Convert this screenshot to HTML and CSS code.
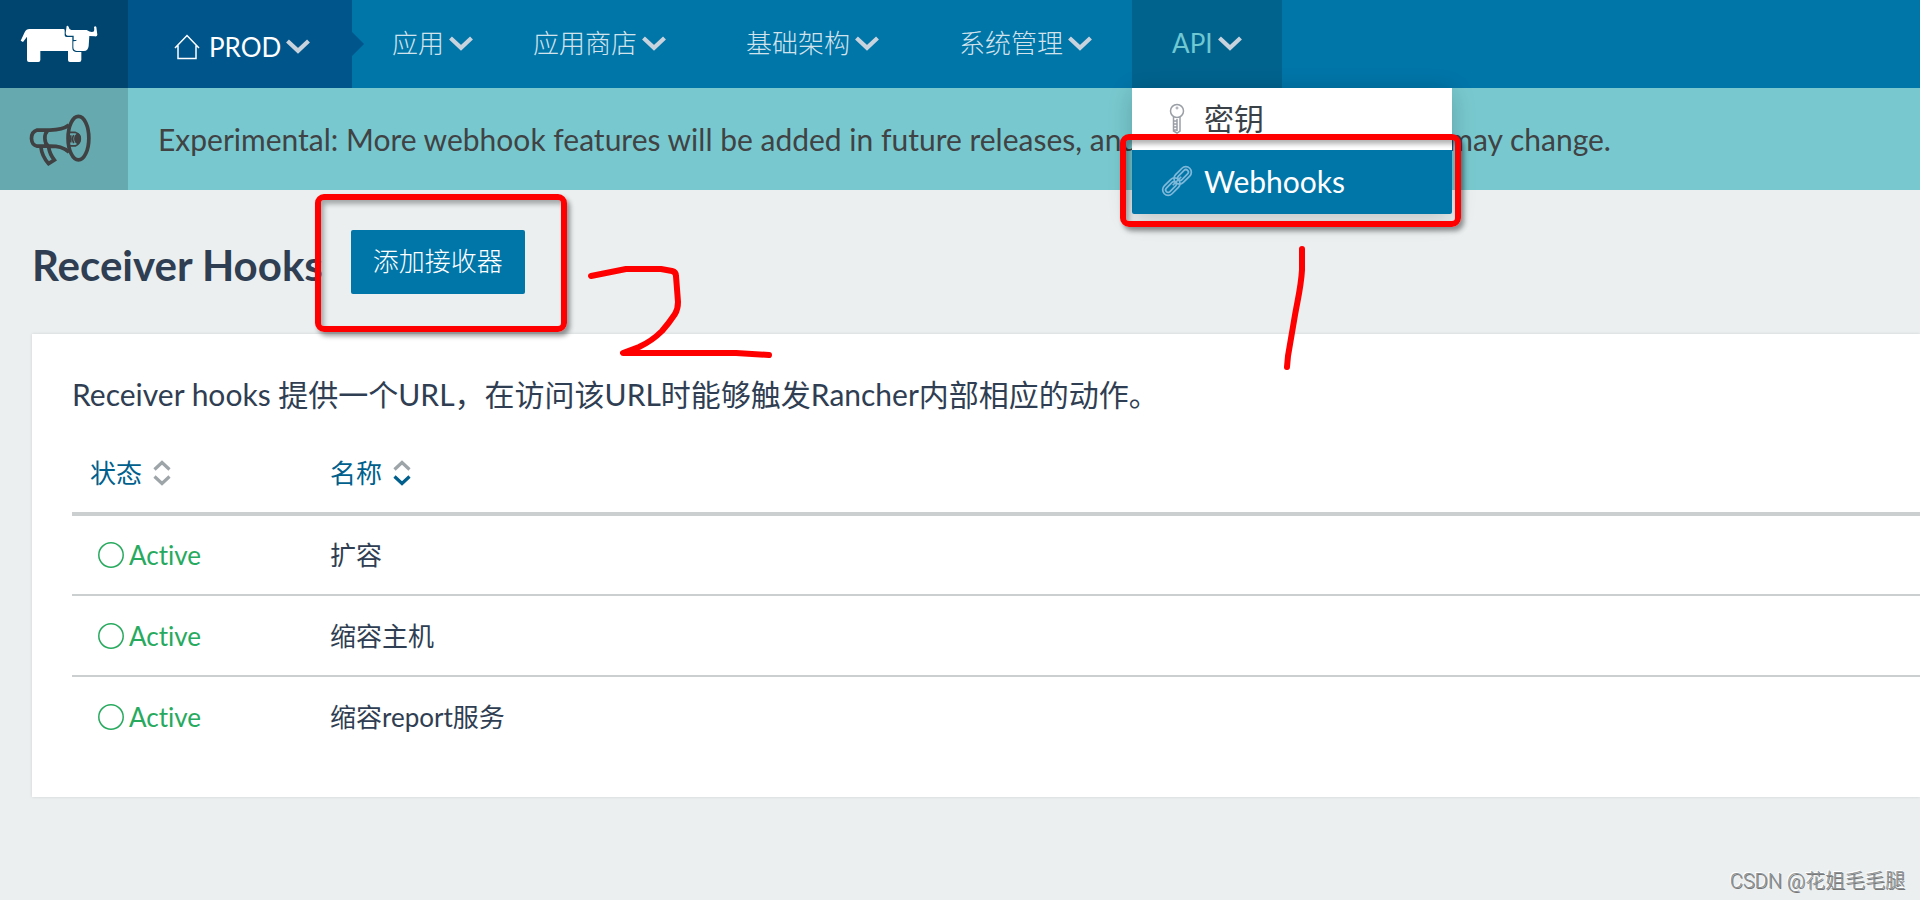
FILE: index.html
```html
<!DOCTYPE html>
<html lang="zh-CN">
<head>
<meta charset="utf-8">
<meta name="viewport" content="width=device-width, initial-scale=1">
<title>Receiver Hooks</title>
<link rel="stylesheet" href="styles.css">
</head>
<body>
<svg class="defs" width="0" height="0" aria-hidden="true">
  <symbol id="chevron" viewBox="0 0 24 15"><path d="M1.500 2 12 11.800 22.500 2" fill="none" stroke="#c9d3dd" stroke-width="4.200"/></symbol>
  <symbol id="ring" viewBox="0 0 26 26"><circle cx="13" cy="13" r="12.200" fill="none" stroke="#27aa5e" stroke-width="1.500"/></symbol>
  <symbol id="up" viewBox="0 0 18 11"><path d="M1.500 9.500 9 2.500 16.500 9.500" fill="none" stroke="currentColor" stroke-width="3.200"/></symbol>
  <symbol id="down" viewBox="0 0 18 11"><path d="M1.500 1.500 9 8.500 16.500 1.500" fill="none" stroke="currentColor" stroke-width="3.200"/></symbol>
</svg>

<header class="header">
  <a class="logo" href="#" aria-label="Rancher">
    <svg class="logo-mark" viewBox="60 75 234 114" aria-hidden="true">
      <path fill="#fff" d="M62 122 74 97Q79 87 88 87H190Q194 87 194 91V106Q194 111 200 111H217V143Q217 154 228 156H244V180Q244 186 238 186H210Q204 186 204 180V153H121V180Q121 186 115 186H87Q81 186 81 180V110L69 126Z"/>
      <path fill="#fff" d="M200 78Q204 76 206 81 207 89 214 90H260Q274 99 282 94 284 89 282 81 286 76 289 81L292 104Q292 110 284 109L268 108 266 138Q264 153 252 153H230Q220 152 220 142V124Q228 124 232 119 228 121 221 120V107H203Q197 107 197 99Z"/>
    </svg>
  </a>
  <a class="env" href="#">
    <svg class="home" viewBox="0 0 26 26" aria-hidden="true"><path d="M1 14 13 1.500 25 14M4 11.500V24.500H22V11.500" fill="none" stroke="#fff" stroke-width="1.500"/></svg>
    <span>PROD</span>
    <svg class="chevron"><use href="#chevron"/></svg>
  </a>
  <nav class="nav">
    <a class="nav-link nav-link-first" href="#">应用<svg class="chevron"><use href="#chevron"/></svg></a>
    <a class="nav-link" href="#">应用商店<svg class="chevron"><use href="#chevron"/></svg></a>
    <a class="nav-link" href="#">基础架构<svg class="chevron"><use href="#chevron"/></svg></a>
    <a class="nav-link" href="#">系统管理<svg class="chevron"><use href="#chevron"/></svg></a>
    <div class="nav-drop">
      <a class="nav-link nav-link-open" href="#">API<svg class="chevron"><use href="#chevron"/></svg></a>
      <div class="menu">
        <a class="menu-item" href="#">
          <svg class="menu-icon" viewBox="0 0 30 32" aria-hidden="true"><g fill="none" stroke="#9a9fa6"><circle cx="15" cy="9" r="6.500" stroke-width="1.500"/><circle cx="15" cy="6" r="1"/><path stroke-width="1.500" d="M11.500 15V29L15 31 18 29V15M15 17V29M12 19H15M12 22H15M12 25H15M12 28H15"/></g></svg>
          密钥
        </a>
        <a class="menu-item menu-item-active" href="#">
          <svg class="menu-icon" viewBox="0 0 30 32" aria-hidden="true"><g transform="rotate(-45 15 16)" fill="none" stroke="#7fb9da" stroke-width="1.700"><rect x="-3" y="10.500" width="20" height="11" rx="5.500"/><rect x="0" y="13.500" width="13" height="5" rx="2.500"/><rect x="13" y="10.500" width="20" height="11" rx="5.500"/><rect x="17" y="13.500" width="13" height="5" rx="2.500"/><path d="M9 16H21"/></g></svg>
          Webhooks
        </a>
        <div class="mark mark-menu"></div>
        <svg class="stroke stroke-one" viewBox="1280 240 30 140" aria-hidden="true"><path d="M1302 249V270C1301 287 1298 298 1295 315L1288 356 1287 367"/></svg>
      </div>
    </div>
  </nav>
</header>

<section class="banner">
  <div class="banner-icon">
    <svg viewBox="88 345 184 158" class="horn" aria-hidden="true"><g fill="none" stroke="#3f4142" stroke-width="11"><ellipse cx="235" cy="417" rx="31" ry="65"/><path d="M207 378C190 391 173 393 150 393H112Q95 398 95 418 96 438 112 441H150C174 441 190 443 207 459M144 393Q134 404 135 418 135 433 145 441M123 443Q126 471 146 493L163 482Q149 464 146 443"/><path stroke-width="5" d="M207 400H226Q240 404 240 420 238 436 226 440H207M212 408V430M221 408Q214 418 221 432"/></g><path fill="#3f4142" d="M234 402Q222 407 222 419T234 436Q243 431 243 419T234 402Z"/></svg>
  </div>
  <p class="banner-text">Experimental: More webhook features will be added in future releases, and existing functionalities may change.</p>
</section>

<main class="main">
  <div class="title-row">
    <h1 class="title">Receiver Hooks</h1>
    <div class="add-wrap">
      <button class="add" type="button">添加接收器</button>
      <div class="mark mark-add"></div>
      <svg class="stroke stroke-two" viewBox="586 262 192 98" aria-hidden="true"><path d="M592 276 627 269H662L673 271Q677 272 677 276L679 302Q679 309 676 314 670 323 663 331 653 341 640 347L624 353H737L770 355"/></svg>
    </div>
  </div>
  <section class="panel">
    <p class="intro">Receiver hooks 提供一个URL，在访问该URL时能够触发Rancher内部相应的动作。</p>
    <table class="hooks">
      <thead>
        <tr>
          <th class="col-state" scope="col"><a class="sort" href="#">状态<span class="arrows"><svg><use href="#up"/></svg><svg><use href="#down"/></svg></span></a></th>
          <th scope="col"><a class="sort" href="#">名称<span class="arrows"><svg><use href="#up"/></svg><svg class="sorted"><use href="#down"/></svg></span></a></th>
        </tr>
      </thead>
      <tbody>
        <tr><td><span class="state"><svg><use href="#ring"/></svg>Active</span></td><td>扩容</td></tr>
        <tr><td><span class="state"><svg><use href="#ring"/></svg>Active</span></td><td>缩容主机</td></tr>
        <tr><td><span class="state"><svg><use href="#ring"/></svg>Active</span></td><td>缩容report服务</td></tr>
      </tbody>
    </table>
  </section>
</main>
<div class="credit">CSDN @花姐毛毛腿</div>
</body>
</html>
```
FILE: styles.css
```css
* {
  box-sizing: border-box;
}

body {
  margin: 0;
  min-height: 100vh;
  position: relative;
  background: #ebeff0;
  color: #2f3e52;
  font-family: "Lato", "Noto Sans CJK SC", sans-serif;
  font-size: 26px;
  font-variant-ligatures: none;
  line-height: 32px;
}

a {
  color: inherit;
  text-decoration: none;
}

svg {
  display: block;
  flex: none;
}

.defs {
  position: absolute;
}

.header {
  display: flex;
  height: 88px;
  background: #0075a8;
}

.logo {
  width: 128px;
  padding: 25px 20px;
  background: #00456f;
}

.logo-mark {
  width: 78px;
  height: 38px;
}

.env {
  position: relative;
  display: flex;
  align-items: center;
  width: 224px;
  padding: 5px 0 0 46px;
  background: #00558b;
  color: #fff;
}

.env::after {
  content: "";
  position: absolute;
  left: 100%;
  top: 32px;
  border: 12px solid transparent;
  border-left-color: #00558b;
  border-right-width: 0;
}

.home {
  width: 26px;
  height: 26px;
  margin-right: 9px;
}

.chevron {
  width: 24px;
  height: 15px;
  margin-left: 5px;
}

.nav {
  display: flex;
}

.nav-link {
  display: flex;
  align-items: center;
  height: 88px;
  padding: 0 40px 2px;
  color: #d3e3ec;
  font-weight: 300;
}

.nav-link-first {
  padding-right: 20px;
}

.nav-drop {
  position: relative;
}

.nav-link-open {
  background: #00638e;
  color: #6fc8d2;
  font-weight: 400;
}

.menu {
  position: absolute;
  z-index: 2;
  top: 88px;
  left: 0;
  width: 320px;
  background: #fff;
  border-radius: 0 0 2px 2px;
  box-shadow: 0 4px 24px rgba(0, 0, 0, 0.2);
}

.menu-item {
  display: flex;
  align-items: center;
  gap: 12px;
  height: 62px;
  padding: 0 0 2px 30px;
  color: #3a4147;
  font-size: 30px;
}

.menu-item-active {
  height: 64px;
  background: #0075a8;
  border-radius: 0 0 2px 2px;
  color: #fff;
}

.menu-icon {
  width: 30px;
  height: 32px;
  overflow: visible;
}

.mark {
  position: absolute;
  border: 6px solid #f00;
  border-radius: 9px;
  box-shadow: 3px 4px 5px rgba(0, 0, 0, 0.4), inset 3px 4px 5px rgba(0, 0, 0, 0.3);
  pointer-events: none;
}

.mark-menu {
  inset: 46px -9px -13px -12px;
}

.mark-add {
  inset: -36px -42px -38px -36px;
}

.stroke {
  position: absolute;
  fill: none;
  stroke: #f00;
  stroke-width: 6px;
  stroke-linecap: round;
  stroke-linejoin: round;
  pointer-events: none;
}

.stroke-one {
  top: 152px;
  left: 148px;
  width: 30px;
  height: 140px;
}

.stroke-two {
  top: 32px;
  left: 234px;
  width: 192px;
  height: 98px;
}

.banner {
  display: flex;
  min-height: 102px;
  background: #78c9cf;
  color: #404244;
}

.banner-icon {
  display: flex;
  align-items: center;
  width: 128px;
  padding: 2px 0 0 29px;
  background: #66aaaf;
}

.horn {
  width: 62px;
  height: 53px;
}

.banner-text {
  align-self: center;
  margin: 0;
  padding-left: 30px;
  font-size: 30px;
}

.main {
  padding: 40px 0 0 32px;
}

.title-row {
  display: flex;
  align-items: center;
  gap: 28px;
}

.title {
  margin: 0;
  padding-top: 6px;
  font-size: 42px;
  line-height: 52px;
}

.add-wrap {
  position: relative;
}

.add {
  display: block;
  height: 64px;
  padding: 0 22px 2px;
  border: 0;
  border-radius: 2px;
  background: #0075a8;
  color: #fff;
  font: inherit;
  font-weight: 300;
}

.panel {
  margin-top: 40px;
  padding: 38px 0 40px 40px;
  background: #fff;
  box-shadow: 0 0 3px rgba(0, 0, 0, 0.12);
}

.intro {
  margin: 0;
  font-size: 30px;
  line-height: 44px;
}

.hooks {
  width: 100%;
  margin-top: 18px;
  border-collapse: collapse;
}

.hooks th {
  height: 80px;
  padding: 0 0 0 18px;
  border-bottom: 4px solid #cbcfd0;
  color: #005f8c;
  font-weight: 400;
  text-align: left;
}

.hooks .col-state {
  width: 240px;
}

.sort {
  display: inline-flex;
  align-items: center;
  gap: 11px;
}

.arrows {
  display: grid;
  gap: 4px;
  color: #9ea5a9;
}

.arrows svg {
  width: 18px;
  height: 11px;
}

.arrows .sorted {
  color: #005f8c;
}

.hooks td {
  height: 81px;
  padding: 0 0 0 18px;
}

.hooks tbody tr + tr td {
  border-top: 2px solid #cbcfd0;
}

.hooks td:first-child {
  padding-left: 26px;
}

.state {
  display: flex;
  align-items: center;
  gap: 5px;
  color: #27aa5e;
}

.state svg {
  width: 26px;
  height: 26px;
}

.credit {
  position: absolute;
  right: 15px;
  bottom: 3px;
  color: #8e9294;
  font-family: Roboto, "Noto Sans CJK SC", sans-serif;
  font-size: 20px;
  font-weight: 300;
  text-shadow: 1px 1px 0 #777, -1px -1px 0 #fff;
}
```
